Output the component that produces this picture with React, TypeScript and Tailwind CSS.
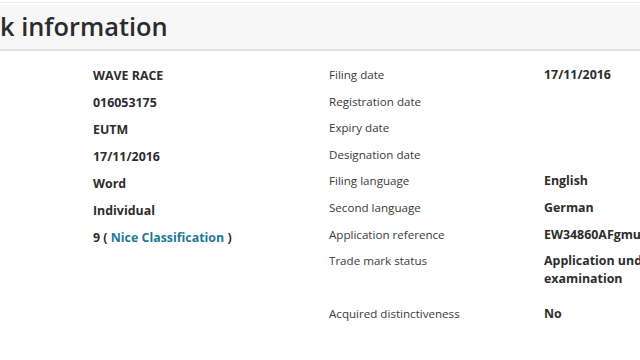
import React from 'react';

const leftValues: React.ReactNode[] = [
  'WAVE RACE',
  '016053175',
  'EUTM',
  '17/11/2016',
  'Word',
  'Individual',
];

const rightRows: { label: string; value?: string; tall?: boolean }[] = [
  { label: 'Filing date', value: '17/11/2016' },
  { label: 'Registration date' },
  { label: 'Expiry date' },
  { label: 'Designation date' },
  { label: 'Filing language', value: 'English' },
  { label: 'Second language', value: 'German' },
  { label: 'Application reference', value: 'EW34860AFgmu' },
  { label: 'Trade mark status', value: 'Application under examination', tall: true },
  { label: 'Acquired distinctiveness', value: 'No' },
];

export default function App() {
  return (
    <div
      className="w-[640px] h-[360px] overflow-hidden bg-white text-[#333]"
      style={{ fontFamily: '"Open Sans", "Liberation Sans", sans-serif' }}
    >
      {/* Section header */}
      <div className="mt-[2px] border-t border-[#ececec] pt-[2px]">
        <div className="h-[46px] bg-[#f7f7f7] border-b-2 border-[#e2e2e2] flex items-center">
          <h2 className="text-[25.4px] font-semibold text-[#2b2b2b] leading-none whitespace-nowrap">
            k information
          </h2>
        </div>
      </div>

      <div className="flex pt-[15px] pl-[93px]">
        {/* Left column */}
        <div className="w-[236px] pt-[1px] shrink-0">
          {leftValues.map((v, i) => (
            <div key={i} className="h-[27px] text-[12.4px] leading-[18px] font-bold text-[#2d2d2d]">
              {v}
            </div>
          ))}
          <div className="h-[27px] text-[12.4px] leading-[18px] font-bold text-[#2d2d2d]">
            9 ( <span className="text-[#1f7896]">Nice Classification</span> )
          </div>
        </div>

        {/* Right column */}
        <div className="shrink-0">
          {rightRows.map((r) => (
            <div
              key={r.label}
              className={`flex leading-[18px] ${r.tall ? 'h-[53px]' : 'h-[26.6px]'}`}
            >
              <div className="w-[215px] shrink-0 text-[11.6px] text-[#3a3a3a]">{r.label}</div>
              <div className="w-[128px] shrink-0 text-[12.4px] font-bold text-[#2d2d2d]">{r.value}</div>
            </div>
          ))}
        </div>
      </div>
    </div>
  );
}
